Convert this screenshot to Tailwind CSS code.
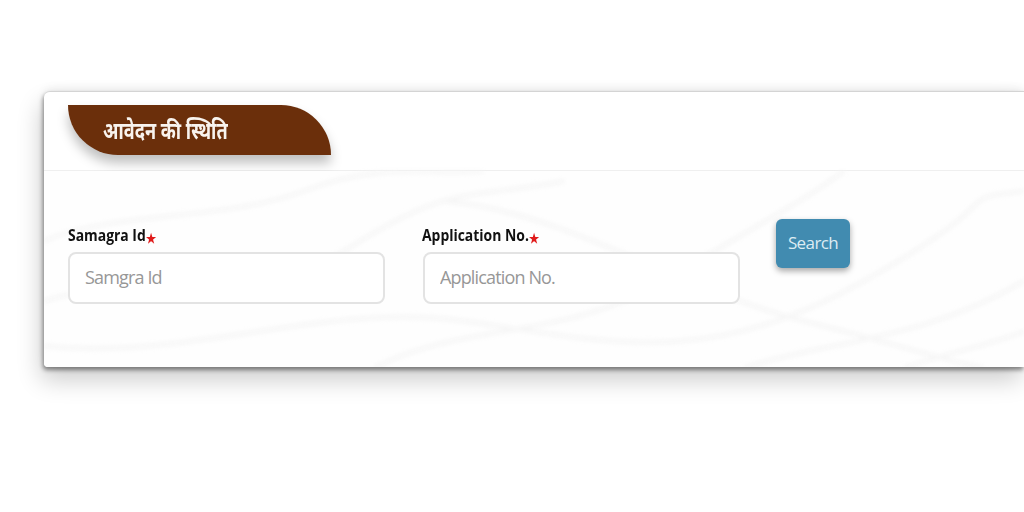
<!DOCTYPE html>
<html>
<head>
	<title>आवेदन की स्थिति</title>
	<meta charset="UTF-8"/>
	<script src="https://cdn.jsdelivr.net/npm/@tailwindcss/browser@4"></script>
</head>
<body class="h-[512px] w-[1024px] overflow-hidden bg-white font-['Open_Sans','Noto_Sans',sans-serif]">
	<div class="ml-[44px] mt-[91px] w-[980px] h-[276px] rounded-tl-md rounded-bl-sm border-t border-[#d4d4d4] bg-white shadow-[-1px_3px_4px_rgba(0,0,0,0.42),-3px_13px_24px_rgba(0,0,0,0.2),0_-2px_10px_rgba(0,0,0,0.07)] flex flex-col overflow-hidden">
		<!-- En-tete -->
		<div class="h-[79px] shrink-0 border-b border-[#efefef] pl-[24px] pt-[13px]">
			<h1 class="w-[263px] h-[50px] rounded-tr-[50px] rounded-bl-[50px] bg-[#6b2f0b] shadow-[0_8px_12px_rgba(0,0,0,0.25)] pl-[35px] flex items-center text-[24px] font-bold text-[#f8f3ee] font-['Noto_Sans',sans-serif]"><span class="origin-left scale-x-[0.755] whitespace-nowrap">आवेदन की स्थिति</span></h1>
		</div>

		<!-- Formulaire -->
		<div class="relative flex-1 bg-[#fefefe]">
			<svg class="absolute inset-0 blur-[2px]" width="980" height="197" viewBox="0 0 980 197" fill="none" stroke="#f6f6f6" stroke-width="4">
				<path d="M0 70C70 40 180 50 260 20S380 5 440 0"/>
				<path d="M0 130C90 100 190 150 300 80S420 30 520 10"/>
				<path d="M0 175C150 190 280 130 420 150S660 200 820 110 900 30 980 20"/>
				<path d="M330 197C420 150 520 170 620 110S760 30 800 0"/>
				<path d="M700 197C780 170 880 170 980 110"/>
				<path d="M400 30C520 40 640 120 760 150S900 190 940 197"/>
				<path d="M860 197C910 180 960 170 980 160"/>
			</svg>
			<div class="relative flex pl-[24px] pt-[48px]">
				<div class="w-[317px]">
					<label class="flex h-[33px] items-start pt-[7px] text-[16px] leading-[19px] font-bold text-[#111]"><span class="flex origin-left scale-x-[0.87] whitespace-nowrap">Samagra Id<span class="text-[#e01b1b] text-[13px] leading-[24px]">★</span></span></label>
					<input placeholder="Samgra Id" class="w-full h-[52px] rounded-lg border-2 border-[#e3e3e3] bg-white pl-[15px] pr-[15px] pb-[3px] text-[18px] tracking-[-0.85px] placeholder:text-[#979797] outline-none"/>
				</div>
				<div class="w-[317px] ml-[38px]">
					<label class="-ml-px flex h-[33px] items-start pt-[7px] text-[16px] leading-[19px] font-bold text-[#111]"><span class="flex origin-left scale-x-[0.87] whitespace-nowrap">Application No.<span class="text-[#e01b1b] text-[13px] leading-[24px]">★</span></span></label>
					<input placeholder="Application No." class="w-full h-[52px] rounded-lg border-2 border-[#e3e3e3] bg-white pl-[15px] pr-[15px] pb-[3px] text-[18px] tracking-[-0.85px] placeholder:text-[#979797] outline-none"/>
				</div>
				<button class="ml-[36px] w-[74px] h-[49px] pb-[2px] rounded-md bg-[#418bb0] text-[#dcecf3] text-[17px] tracking-[-0.6px] shadow-[0_3px_6px_rgba(0,0,0,0.35)]">Search</button>
			</div>
		</div>
	</div>
</body>
</html>
